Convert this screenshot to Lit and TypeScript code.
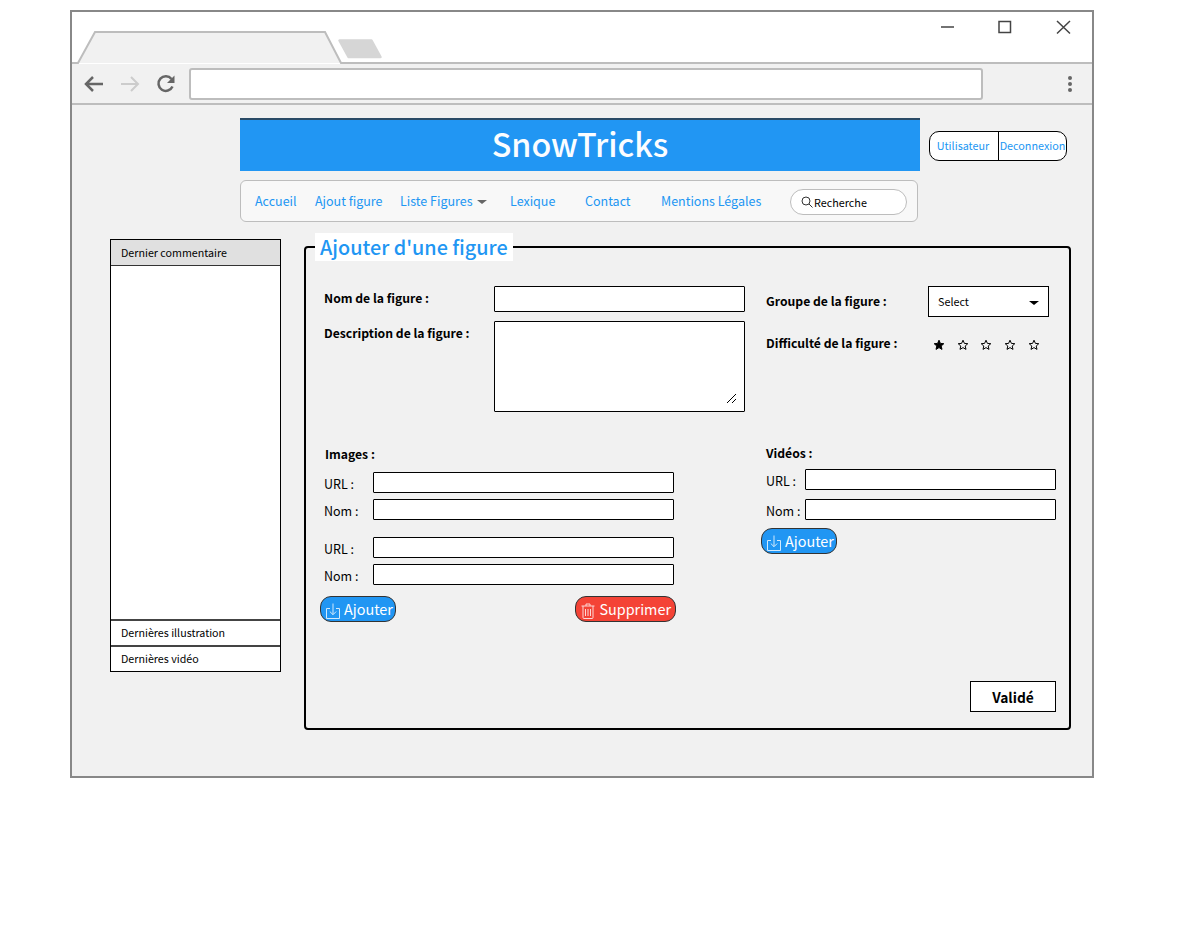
import { LitElement, html, css, svg } from 'lit';
import { customElement } from 'lit/decorators.js';

const downloadIcon = html`<svg class="btn-icon" viewBox="0 0 14 16" width="14" height="16" fill="none" stroke="currentColor" stroke-width="1">
  <path d="M4 5.500H.5v10h13v-10H10" />
  <path d="M7 .5v11M3.800 8.500 7 11.700l3.200-3.200" />
</svg>`;

const trashIcon = html`<svg class="btn-icon" viewBox="0 0 14 16" width="14" height="16" fill="none" stroke="currentColor" stroke-width="1">
  <path d="M.5 3h13M5 3V1h4v2M2 3v11.500a1 1 0 0 0 1 1h8a1 1 0 0 0 1-1V3" />
  <path d="M4.500 6v7M7 6v7M9.500 6v7" />
</svg>`;

const star = (filled: boolean) => html`<svg viewBox="0 0 12 12" width="12" height="12">
  <path
    d="M6 1.200 7.400 4.400l3.400.3-2.600 2.300.8 3.400L6 8.600l-3 1.800.8-3.400L1.200 4.700l3.400-.3z"
    fill=${filled ? '#000' : 'none'}
    stroke="#000"
    stroke-width="1"
    stroke-linejoin="round"
  />
</svg>`;

// tab strip and window buttons, coordinates are the ones of the page
const titlebarArt = svg`
  <path d="M72 63H78L95 32H325L341 63H1092" fill="#f1f1f1" stroke="#bdbdbd" stroke-width="2" />
  <path d="M339.500 40.500H371.500L380.500 57H348.500z" fill="#d6d6d6" stroke="#d6d6d6" stroke-width="2.500" stroke-linejoin="round" />
  <path d="M941 27H954" stroke="#444" stroke-width="1.500" fill="none" />
  <rect x="999" y="21.500" width="11.500" height="11" stroke="#444" stroke-width="1.500" fill="none" />
  <path d="M1057 21 1070 33.500M1070 21 1057 33.500" stroke="#444" stroke-width="1.500" fill="none" />
`;

@customElement('app-root')
export class AppRoot extends LitElement {
  static styles = css`
    :host {
      display: block;
      width: 1184px;
      height: 928px;
      background: #fff;
      font-family: 'Noto Sans CJK JP', 'Noto Sans', sans-serif;
      color: #000;
      overflow: hidden;
    }

    * {
      box-sizing: border-box;
    }

    .window {
      margin: 10px 0 0 70px;
      width: 1024px;
      height: 768px;
      border: 2px solid #888;
      display: flex;
      flex-direction: column;
      background: #f1f1f1;
    }

    .titlebar {
      display: block;
      flex: none;
      background: #fff;
    }

    .toolbar {
      flex: none;
      height: 41px;
      display: flex;
      align-items: center;
      padding: 1px 0 0 11px;
      border-bottom: 2px solid #bdbdbd;
    }

    .toolbar svg {
      display: block;
      flex: none;
    }

    .nav-arrow {
      margin-right: 14px;
    }

    .reload {
      margin-left: 1px;
    }

    .address {
      width: 794px;
      height: 32px;
      margin-left: 13px;
      background: #fff;
      border: 2px solid #bdbdbd;
      border-radius: 3px;
    }

    .dots {
      margin-left: 84px;
    }

    .head {
      display: flex;
      gap: 9px;
      margin: 13px 0 0 168px;
    }

    .banner {
      width: 680px;
      height: 53px;
      background: #2196f3;
      border-top: 2px solid #2a4a66;
      color: #fbfdff;
      font-size: 32.300px;
      font-weight: 500;
      line-height: 47px;
      text-align: center;
    }

    .auth {
      display: flex;
      width: 138px;
      height: 30px;
      margin-top: 13px;
      background: #fff;
      border: 1px solid #000;
      border-radius: 10px;
      color: #2196f3;
      font-size: 10.800px;
      line-height: 27px;
    }

    .auth span:first-child {
      flex: none;
      width: 69px;
      padding-right: 2px;
      text-align: center;
      border-right: 1px solid #000;
    }

    .auth span:last-child {
      flex: 1;
      text-align: center;
      white-space: nowrap;
    }

    .menu {
      display: flex;
      align-items: center;
      width: 678px;
      height: 42px;
      margin: 9px 0 0 168px;
      padding-left: 14px;
      background: #f8f8f8;
      border: 1px solid #bdbdbd;
      border-radius: 6px;
      color: #2196f3;
      font-size: 12.500px;
      line-height: 20px;
    }

    .menu span {
      white-space: nowrap;
    }

    .caret {
      display: inline-block;
      width: 0;
      height: 0;
      margin-left: 4px;
      vertical-align: 2px;
      border: 5px solid transparent;
      border-top: 4px solid #666;
      border-bottom-width: 0;
    }

    .search {
      display: flex;
      align-items: center;
      gap: 1px;
      width: 117px;
      height: 26px;
      margin: 1px 10px 0 auto;
      padding-left: 10px;
      background: #fff;
      border: 1px solid #bdbdbd;
      border-radius: 13px;
      color: #000;
      font-size: 10.800px;
    }

    .main {
      display: flex;
      align-items: flex-start;
      margin: 11px 0 0 38px;
    }

    .side {
      width: 171px;
      height: 433px;
      margin-top: 6px;
      display: flex;
      flex-direction: column;
      background: #fff;
      border: 1px solid #000;
      font-size: 10.700px;
    }

    .side div {
      height: 26px;
      padding-left: 10px;
      line-height: 24px;
      flex: none;
    }

    .side .top {
      background: #e0e0e0;
      border-bottom: 1px solid #333;
      line-height: 26px;
    }

    .side .gap {
      flex: 1;
    }

    .side .row {
      border-top: 2px solid #444;
    }

    fieldset {
      width: 767px;
      height: 497px;
      margin: 0 0 0 23px;
      padding: 23px 13px 16px 14px;
      border: 2px solid #000;
      border-radius: 4px;
      min-width: 0;
    }

    legend {
      margin: 0 0 2px -5px;
      padding: 0 5px;
      height: 28px;
      background: #fff;
      color: #2196f3;
      font-size: 19.800px;
      font-weight: 500;
      line-height: 28px;
    }

    .form {
      height: 100%;
      display: flex;
      flex-direction: column;
    }

    .cols {
      display: grid;
      grid-template-columns: 441px 295px;
    }

    .field-label {
      font-size: 12.200px;
      font-weight: 600;
      line-height: 20px;
      white-space: nowrap;
    }

    .top-grid {
      display: grid;
      grid-template-columns: 170px 251px;
      grid-template-rows: 26px 91px;
      row-gap: 9px;
      padding-left: 4px;
    }

    input {
      display: block;
      margin: 0;
      padding: 0;
      background: #fff;
      border: 1px solid #000;
      border-radius: 1px;
      outline: none;
    }

    .top-grid .field-label {
      padding-top: 2px;
    }

    .top-grid input {
      width: 251px;
      height: 26px;
    }

    .area {
      position: relative;
      background: #fff;
      border: 1px solid #000;
      border-radius: 1px;
    }

    .grip {
      position: absolute;
      right: 8px;
      bottom: 8px;
      display: block;
    }

    .right-top {
      display: grid;
      grid-template-columns: 162px 121px;
      align-content: start;
      padding-left: 5px;
    }

    .select {
      display: flex;
      align-items: center;
      justify-content: space-between;
      width: 121px;
      height: 31px;
      padding: 0 9px 2px;
      background: #fff;
      border: 1px solid #000;
      font-size: 10.800px;
      line-height: 26px;
    }

    .select i {
      margin-top: 5px;
      border: 5px solid transparent;
      border-top: 4px solid #000;
      border-bottom-width: 0;
    }

    .stars {
      display: flex;
      gap: 11.700px;
      margin: 22px 0 0 5px;
    }

    .right-top .group {
      padding-top: 5px;
    }

    .right-top .diff {
      margin-top: 16px;
    }

    .lower {
      margin-top: 32px;
    }

    .pair {
      display: grid;
      row-gap: 6px;
    }

    .line {
      display: flex;
      align-items: center;
      height: 21px;
      padding-left: 4px;
      font-size: 12.500px;
    }

    .line span {
      flex: none;
      padding-top: 2px;
    }

    .images .line span {
      width: 49px;
    }

    .images input {
      width: 301px;
      height: 21px;
    }

    .videos {
      padding-left: 5px;
    }

    .videos .pair {
      row-gap: 9px;
    }

    .videos .line {
      padding-left: 0;
    }

    .videos .line span {
      width: 39px;
    }

    .videos input {
      width: 251px;
      height: 21px;
    }

    .videos .field-label {
      margin-top: -1px;
      padding-bottom: 6px;
    }

    .pair-list {
      display: grid;
      row-gap: 17px;
    }

    .actions {
      display: flex;
      width: 356px;
      justify-content: space-between;
      margin-top: 11px;
    }

    .btn {
      display: inline-flex;
      align-items: center;
      gap: 4px;
      height: 26px;
      padding: 0 2px 0 5px;
      border: 1px solid #333;
      border-radius: 11px;
      color: #fff;
      font-size: 14.400px;
      line-height: 22px;
      white-space: nowrap;
    }

    .btn-icon {
      flex: none;
      margin-top: 3px;
      opacity: 0.8;
    }

    .btn.add {
      background: #2196f3;
    }

    .btn.del {
      background: #f44336;
      padding-right: 4px;
    }

    .submit-row {
      margin-top: auto;
      display: flex;
      justify-content: flex-end;
    }

    .submit {
      width: 86px;
      height: 31px;
      background: #fff;
      border: 1px solid #000;
      font-size: 13.800px;
      font-weight: 600;
      line-height: 31px;
      text-align: center;
    }
  `;

  private urlPair() {
    return html`<div class="pair">
      <div class="line"><span>URL :</span><input type="text" /></div>
      <div class="line"><span>Nom :</span><input type="text" /></div>
    </div>`;
  }

  render() {
    return html`
      <div class="window">
        <svg class="titlebar" width="1020" height="52" viewBox="72 12 1020 52">${titlebarArt}</svg>
        <div class="toolbar">
          <svg class="nav-arrow" width="22" height="18" viewBox="0 0 22 18" fill="none" stroke="#666" stroke-width="2.500">
            <path d="M20 9H3M10 2 3 9l7 7" />
          </svg>
          <svg class="nav-arrow" width="22" height="18" viewBox="0 0 22 18" fill="none" stroke="#ccc" stroke-width="2">
            <path d="M2 9H19M12 2l7 7-7 7" />
          </svg>
          <svg class="reload" width="20" height="20" viewBox="0 0 20 20" fill="none">
            <path d="M16.500 12.500A7.300 7.300 0 1 1 15.500 5" stroke="#666" stroke-width="2.500" />
            <path d="M18.500 1.500v7.500H11z" fill="#666" />
          </svg>
          <div class="address"></div>
          <svg class="dots" width="6" height="18" viewBox="0 0 6 18" fill="#666">
            <circle cx="3" cy="3" r="2" /><circle cx="3" cy="9" r="2" /><circle cx="3" cy="15" r="2" />
          </svg>
        </div>

        <div class="head">
          <div class="banner">SnowTricks</div>
          <div class="auth"><span>Utilisateur</span><span>Deconnexion</span></div>
        </div>

        <div class="menu">
          <span style="width:60px">Accueil</span>
          <span style="width:85px">Ajout figure</span>
          <span style="width:110px">Liste Figures<i class="caret"></i></span>
          <span style="width:75px">Lexique</span>
          <span style="width:76px">Contact</span>
          <span>Mentions Légales</span>
          <div class="search">
            <svg width="12" height="12" viewBox="0 0 12 12" fill="none" stroke="#333" stroke-width="1">
              <circle cx="5" cy="5" r="4" /><path d="M8 8l3.500 3.500" />
            </svg>
            Recherche
          </div>
        </div>

        <div class="main">
          <aside class="side">
            <div class="top">Dernier commentaire</div>
            <div class="gap"></div>
            <div class="row">Dernières illustration</div>
            <div class="row">Dernières vidéo</div>
          </aside>

          <fieldset>
            <legend>Ajouter d'une figure</legend>
            <div class="form">
              <div class="cols">
                <div class="top-grid">
                  <div class="field-label">Nom de la figure :</div>
                  <input type="text" />
                  <div class="field-label">Description de la figure :</div>
                  <div class="area">
                    <svg class="grip" width="9" height="9" viewBox="0 0 9 9" stroke="#000" stroke-width="1">
                      <path d="M0 9 9 0M5 9 9 5" />
                    </svg>
                  </div>
                </div>
                <div class="right-top">
                  <div class="field-label group">Groupe de la figure :</div>
                  <div class="select">Select<i></i></div>
                  <div class="field-label diff">Difficulté de la figure :</div>
                  <div class="stars">${[true, false, false, false, false].map((f) => star(f))}</div>
                </div>
              </div>

              <div class="cols lower">
                <div class="images">
                  <div class="field-label" style="padding:0 0 8px 5px">Images :</div>
                  <div class="pair-list">${this.urlPair()} ${this.urlPair()}</div>
                  <div class="actions">
                    <div class="btn add">${downloadIcon}Ajouter</div>
                    <div class="btn del">${trashIcon}Supprimer</div>
                  </div>
                </div>
                <div class="videos">
                  <div class="field-label">Vidéos :</div>
                  ${this.urlPair()}
                  <div class="btn add" style="margin:8px 0 0 -5px">${downloadIcon}Ajouter</div>
                </div>
              </div>

              <div class="submit-row"><div class="submit">Validé</div></div>
            </div>
          </fieldset>
        </div>
      </div>
    `;
  }
}
